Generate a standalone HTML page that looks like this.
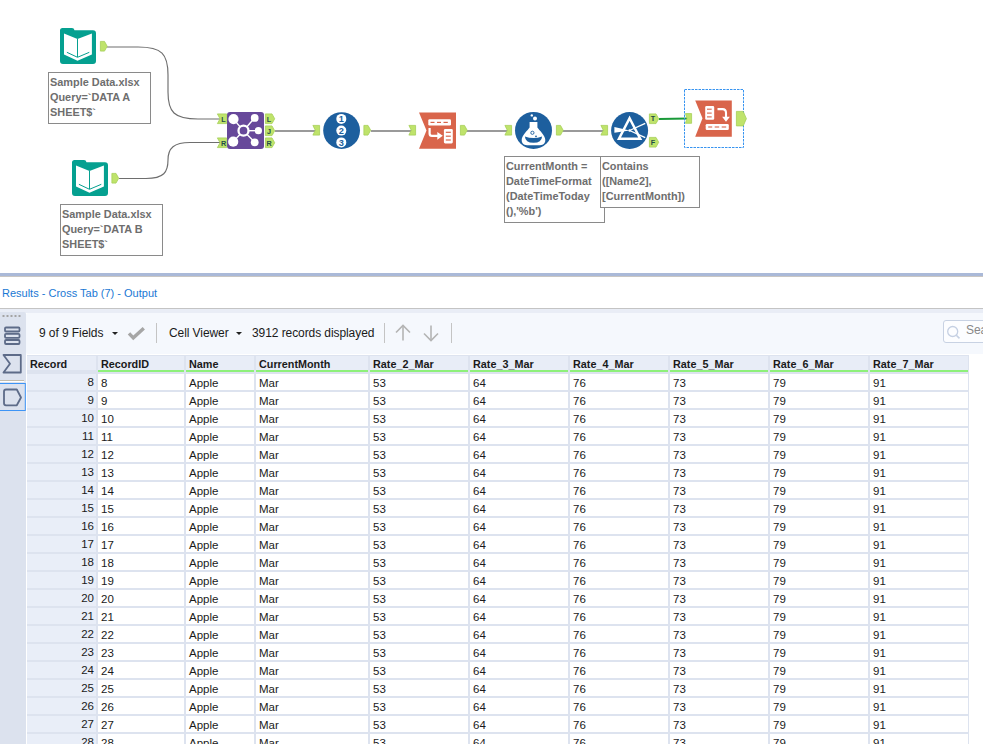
<!DOCTYPE html>
<html><head><meta charset="utf-8">
<style>
*{margin:0;padding:0;box-sizing:border-box}
html,body{width:983px;height:744px;overflow:hidden;background:#fff;font-family:"Liberation Sans",sans-serif}
#root{position:relative;width:983px;height:744px;overflow:hidden}
.ann{position:absolute;border:1px solid #8a8a8a;background:#fff;font-weight:bold;font-size:10.9px;line-height:15px;color:#6e6e6e;padding:2px 0 0 1px;white-space:nowrap;overflow:hidden}
.sepbar{position:absolute;left:0;top:273px;width:983px;height:3px;background:#aab9d8}
.sepline{position:absolute;left:0;top:276px;width:983px;height:2px;background:linear-gradient(#c9c6c3 50%,#e6e6e6 50%)}
.reshead{position:absolute;left:0;top:277px;width:983px;height:32px;background:#fff;border-bottom:1px solid #c4c4c4}
.restitle{position:absolute;left:2px;top:287px;font-size:11px;color:#1a78d4;white-space:nowrap}
.band{position:absolute;left:0;top:309px;width:983px;height:4px;background:#e9edf6}
.side{position:absolute;left:0;top:312px;width:26px;height:432px;background:#dce2ee;border-top-right-radius:2px}
.toolbar{position:absolute;left:26px;top:313px;width:957px;height:41px;background:#f5f8fd;border-top-left-radius:2px;border-bottom-left-radius:2px}
.tb{position:absolute;font-size:12px;letter-spacing:-0.08px;line-height:14px;color:#1a1a1a;white-space:nowrap;top:326px}
.vsep{position:absolute;top:323px;width:1px;height:20px;background:#c4c4c4}
.tablebg{position:absolute;left:26px;top:354px;width:957px;height:390px;background:#fff}
.grid{position:absolute;left:27px;top:355px;width:942px;height:389px;background:#dde3ef}
.hc{position:absolute;top:356px;height:14px;background:#e8edf7;font-weight:bold;font-size:10.8px;line-height:12px;color:#1a1a1a;padding:2px 0 0 3px;white-space:nowrap;overflow:hidden}
.gl{position:absolute;top:370px;height:2px;background:#8ef07a}
.rc{position:absolute;height:16px;background:#e9eef8;font-size:11.5px;line-height:13px;color:#1a1a1a;text-align:right;padding:2px 2px 0 0;white-space:nowrap}
.dc{position:absolute;height:16px;background:#fff;font-size:11.5px;line-height:13px;color:#1a1a1a;padding:3px 0 0 3px;white-space:nowrap;overflow:hidden}
.tri{position:absolute;width:0;height:0;border-left:3px solid transparent;border-right:3px solid transparent;border-top:3px solid #222}
</style></head><body><div id="root">
<svg width="983" height="272" viewBox="0 0 983 272" style="position:absolute;left:0;top:0">
<g fill="none" stroke="#6e6e6e" stroke-width="1.15">
<path d="M107,47 L138,47 C162,47 168,54 168,75 L168,92 C168,112 174,119 198,119 L220,119"/>
<path d="M119,178.5 L146,178.5 C164,178.5 168,172 168,160 C168,148 174,142.5 190,142.5 L220,142.5"/>
</g>
<g stroke="#9a9a9a" stroke-width="2">
<line x1="275" y1="131" x2="316" y2="131"/>
<line x1="371" y1="131" x2="412" y2="131"/>
<line x1="467" y1="131" x2="508" y2="131"/>
<line x1="563" y1="131" x2="604" y2="131"/>
</g>
<line x1="659" y1="119" x2="688" y2="118.5" stroke="#1a9a3a" stroke-width="2"/>
<g transform="translate(60,28)">
<path d="M2.5,0 L12,0 Q14,0 14.5,2.2 L33,2.2 Q36,2.2 36,5.2 L36,33 Q36,36 33,36 L3,36 Q0,36 0,33 L0,2.5 Q0,0 2.5,0 Z" fill="#05a090"/>
<polygon points="4,5.4 17.5,11 31.9,5.4 31.9,26.5 17.5,32.8 4,26.5" fill="#fff"/>
<polyline points="6.9,24.3 17.5,29.3 29.3,24.3" fill="none" stroke="#05a090" stroke-width="1"/>
<line x1="17.5" y1="11" x2="17.5" y2="29" stroke="#05a090" stroke-width="1"/>
</g>
<g transform="translate(72,160)">
<path d="M2.5,0 L12,0 Q14,0 14.5,2.2 L33,2.2 Q36,2.2 36,5.2 L36,33 Q36,36 33,36 L3,36 Q0,36 0,33 L0,2.5 Q0,0 2.5,0 Z" fill="#05a090"/>
<polygon points="4,5.4 17.5,11 31.9,5.4 31.9,26.5 17.5,32.8 4,26.5" fill="#fff"/>
<polyline points="6.9,24.3 17.5,29.3 29.3,24.3" fill="none" stroke="#05a090" stroke-width="1"/>
<line x1="17.5" y1="11" x2="17.5" y2="29" stroke="#05a090" stroke-width="1"/>
</g>
<path d="M100.4,41.4 L104.5,41.4 L107.2,46.25 L104.5,51.1 L100.4,51.1 Z" fill="#bfe36b" stroke="#a6cf58" stroke-width="0.8" stroke-linejoin="round"/>
<path d="M111.9,173.4 L116.0,173.4 L118.7,178.25 L116.0,183.1 L111.9,183.1 Z" fill="#bfe36b" stroke="#a6cf58" stroke-width="0.8" stroke-linejoin="round"/>
<g transform="translate(227,112)">
<rect x="0" y="0" width="37" height="37" rx="3" fill="#67489a"/>
<g stroke="#fff" stroke-width="1.4">
<line x1="16.5" y1="18.7" x2="6.5" y2="7.1"/><line x1="16.5" y1="18.7" x2="27.7" y2="5.8"/>
<line x1="16.5" y1="18.7" x2="31.6" y2="18.7"/><line x1="16.5" y1="18.7" x2="27.7" y2="30.3"/>
<line x1="16.5" y1="18.7" x2="6.1" y2="29.7"/>
</g>
<circle cx="6.5" cy="7.1" r="5.1" fill="#fff"/><circle cx="27.7" cy="5.9" r="3.9" fill="#fff"/>
<circle cx="31.4" cy="18.7" r="3.6" fill="#fff"/><circle cx="27.7" cy="30.3" r="3.9" fill="#fff"/>
<circle cx="6.2" cy="29.7" r="5.1" fill="#fff"/>
<circle cx="16.5" cy="18.7" r="5" fill="#67489a" stroke="#fff" stroke-width="2.3"/>
</g>
<polygon points="217.4,113.9 226.6,113.9 226.6,123.6 217.4,123.6 220,118.75" fill="#bfe36b" stroke="#a6cf58" stroke-width="0.8"/>
<text x="223.5" y="121.5" text-anchor="middle" font-family="Liberation Sans" font-weight="bold" font-size="7.2" fill="#1f4d47">L</text>
<polygon points="217.4,137.9 226.6,137.9 226.6,147.6 217.4,147.6 220,142.75" fill="#bfe36b" stroke="#a6cf58" stroke-width="0.8"/>
<text x="223.5" y="145.5" text-anchor="middle" font-family="Liberation Sans" font-weight="bold" font-size="7.2" fill="#1f4d47">R</text>
<path d="M265.4,113.9 L272,113.9 L274.7,118.75 L272,123.6 L265.4,123.6 Z" fill="#bfe36b" stroke="#a6cf58" stroke-width="0.8" stroke-linejoin="round"/>
<text x="269" y="121.5" text-anchor="middle" font-family="Liberation Sans" font-weight="bold" font-size="7.2" fill="#1f4d47">L</text>
<path d="M265.4,125.9 L272,125.9 L274.7,130.75 L272,135.6 L265.4,135.6 Z" fill="#bfe36b" stroke="#a6cf58" stroke-width="0.8" stroke-linejoin="round"/>
<text x="269" y="133.5" text-anchor="middle" font-family="Liberation Sans" font-weight="bold" font-size="7.2" fill="#1f4d47">J</text>
<path d="M265.4,137.9 L272,137.9 L274.7,142.75 L272,147.6 L265.4,147.6 Z" fill="#bfe36b" stroke="#a6cf58" stroke-width="0.8" stroke-linejoin="round"/>
<text x="269" y="145.5" text-anchor="middle" font-family="Liberation Sans" font-weight="bold" font-size="7.2" fill="#1f4d47">R</text>
<polygon points="312.9,125.4 319.6,125.4 319.6,135.1 312.9,135.1 315.3,130.25" fill="#bfe36b" stroke="#a6cf58" stroke-width="0.8"/>
<circle cx="341.6" cy="130.6" r="18.4" fill="#1d5f9e"/>
<circle cx="341.3" cy="118.9" r="5" fill="#fff"/><text x="341.3" y="122.30000000000001" text-anchor="middle" font-family="Liberation Sans" font-weight="bold" font-size="9.2" fill="#1d5f9e">1</text>
<circle cx="341.3" cy="130.6" r="5" fill="#fff"/><text x="341.3" y="134.0" text-anchor="middle" font-family="Liberation Sans" font-weight="bold" font-size="9.2" fill="#1d5f9e">2</text>
<circle cx="341.3" cy="142.4" r="5" fill="#fff"/><text x="341.3" y="145.8" text-anchor="middle" font-family="Liberation Sans" font-weight="bold" font-size="9.2" fill="#1d5f9e">3</text>
<path d="M363.9,125.4 L368.0,125.4 L370.7,130.25 L368.0,135.1 L363.9,135.1 Z" fill="#bfe36b" stroke="#a6cf58" stroke-width="0.8" stroke-linejoin="round"/>
<polygon points="408.9,125.4 415.6,125.4 415.6,135.1 408.9,135.1 411.3,130.25" fill="#bfe36b" stroke="#a6cf58" stroke-width="0.8"/>
<g transform="translate(419,112.4)">
<polygon points="0,0 37,0 37,36.3 0,36.3 7.5,18.2" fill="#d9654b"/>
<rect x="9.3" y="6.8" width="22.7" height="6.4" rx="1.3" fill="#fff"/>
<g stroke="#d9654b" stroke-width="1.2"><line x1="11.5" y1="10" x2="15.5" y2="10"/><line x1="18" y1="10" x2="22" y2="10"/><line x1="24.5" y1="10" x2="28.8" y2="10"/></g>
<path d="M10.6,15.7 L10.6,21 Q10.6,23.4 13,23.4 L19.5,23.4" fill="none" stroke="#fff" stroke-width="2.2"/>
<polygon points="18.3,19.5 23.8,23.4 18.3,27.3" fill="#fff"/>
<rect x="24.9" y="16.7" width="8.9" height="14.3" rx="1.3" fill="#fff"/>
<g stroke="#d9654b" stroke-width="1.2"><line x1="26.8" y1="19.9" x2="31.8" y2="19.9"/><line x1="26.8" y1="23.8" x2="31.8" y2="23.8"/><line x1="26.8" y1="27.6" x2="31.8" y2="27.6"/></g>
</g>
<path d="M460.4,125.4 L464.5,125.4 L467.2,130.25 L464.5,135.1 L460.4,135.1 Z" fill="#bfe36b" stroke="#a6cf58" stroke-width="0.8" stroke-linejoin="round"/>
<polygon points="504.9,125.4 511.6,125.4 511.6,135.1 504.9,135.1 507.3,130.25" fill="#bfe36b" stroke="#a6cf58" stroke-width="0.8"/>
<g transform="translate(533.5,130.4)">
<circle r="18.5" fill="#1d5f9e"/>
<path d="M-3.9,-8.3 L3.9,-8.3 L3.9,-3 C5.5,-0.5 11.8,5 11.8,9.5 C11.8,13.5 9,14.8 5,14.8 L-5,14.8 C-9,14.8 -11.8,13.5 -11.8,9.5 C-11.8,5 -5.5,-0.5 -3.9,-3 Z" fill="#fff"/>
<path d="M-8.6,6 Q0,9 8.6,6 Q8.2,12.3 0,12.3 Q-8.2,12.3 -8.6,6 Z" fill="#1d5f9e"/>
<circle cx="-1.1" cy="2.4" r="1.6" fill="none" stroke="#1d5f9e" stroke-width="0.9"/>
<circle cx="2.5" cy="5.9" r="0.9" fill="#1d5f9e"/>
<circle cx="1.5" cy="-11.8" r="2" fill="#fff"/><circle cx="-1.7" cy="-15" r="1.2" fill="#fff"/>
</g>
<path d="M556.4,125.4 L560.5,125.4 L563.2,130.25 L560.5,135.1 L556.4,135.1 Z" fill="#bfe36b" stroke="#a6cf58" stroke-width="0.8" stroke-linejoin="round"/>
<polygon points="600.9,125.4 607.6,125.4 607.6,135.1 600.9,135.1 603.3,130.25" fill="#bfe36b" stroke="#a6cf58" stroke-width="0.8"/>
<g transform="translate(629.6,130.5)">
<circle r="18.5" fill="#1d5f9e"/>
<polygon points="0,-12.3 10.6,8.2 -10.6,8.2" fill="none" stroke="#fff" stroke-width="2.5" stroke-linejoin="miter"/><circle cx="0" cy="0" r="1.2" fill="#fff"/>
<polygon points="-15.2,-3.4 -15.2,2.3 0,0" fill="#fff"/>
<line x1="0" y1="0" x2="15.6" y2="-7.1" stroke="#fff" stroke-width="1.3"/>
<line x1="0" y1="0" x2="15.6" y2="7.1" stroke="#fff" stroke-width="1.3"/>
</g>
<path d="M649.4,113.9 L656,113.9 L658.7,118.75 L656,123.6 L649.4,123.6 Z" fill="#bfe36b" stroke="#a6cf58" stroke-width="0.8" stroke-linejoin="round"/>
<text x="653" y="121" text-anchor="middle" font-family="Liberation Sans" font-weight="bold" font-size="7.2" fill="#1f4d47">T</text>
<path d="M649.4,137.4 L656,137.4 L658.7,142.25 L656,147.1 L649.4,147.1 Z" fill="#bfe36b" stroke="#a6cf58" stroke-width="0.8" stroke-linejoin="round"/>
<text x="653" y="144.5" text-anchor="middle" font-family="Liberation Sans" font-weight="bold" font-size="7.2" fill="#1f4d47">F</text>
<rect x="684.5" y="89.5" width="59" height="58" fill="none" stroke="#3894f0" stroke-width="1" stroke-dasharray="2.5,1"/>
<polygon points="685.4,113.60000000000001 691.6,113.60000000000001 691.6,123.3 685.4,123.3 687,118.45" fill="#bfe36b" stroke="#a6cf58" stroke-width="0.8"/>
<g transform="translate(695.2,100.5)">
<polygon points="0,0 36.6,0 36.6,36.2 0,36.2 7.3,17.8" fill="#d9654b"/>
<rect x="10" y="5.6" width="9" height="13.7" rx="1.3" fill="#fff"/>
<g stroke="#d9654b" stroke-width="1.1"><line x1="11.8" y1="8.7" x2="16.5" y2="8.7"/><line x1="11.8" y1="12.6" x2="16.5" y2="12.6"/><line x1="11.8" y1="16.4" x2="16.5" y2="16.4"/></g>
<path d="M22.3,8.6 L27.3,8.6 Q30.8,8.6 30.8,12.3 L30.8,17" fill="none" stroke="#fff" stroke-width="2.1"/>
<polygon points="26.9,16.3 34.7,16.3 30.8,21.2" fill="#fff"/>
<rect x="10.5" y="23.5" width="23.1" height="6.1" rx="1.3" fill="#fff"/>
<g stroke="#d9654b" stroke-width="1.1"><line x1="13" y1="26.5" x2="17" y2="26.5"/><line x1="19.5" y1="26.5" x2="24" y2="26.5"/><line x1="26.5" y1="26.5" x2="31" y2="26.5"/></g>
</g>
<path d="M736.4,111.4 L743.2,111.4 L746.4000000000001,118.65 L743.2,125.89999999999999 L736.4,125.89999999999999 Z" fill="#bfe36b" stroke="#a6cf58" stroke-width="0.8" stroke-linejoin="round"/>
</svg>
<div class="ann" style="left:48px;top:72px;width:103px;height:52px">Sample Data.xlsx<br>Query=`DATA A<br>SHEET$`</div><div class="ann" style="left:60px;top:204px;width:103px;height:52px">Sample Data.xlsx<br>Query=`DATA B<br>SHEET$`</div><div class="ann" style="left:504px;top:156px;width:101px;height:67px">CurrentMonth =<br>DateTimeFormat<br>(DateTimeToday<br>(),'%b')</div><div class="ann" style="left:600px;top:156px;width:100px;height:52px">Contains<br>([Name2],<br>[CurrentMonth])</div>
<div class="sepbar"></div><div class="sepline"></div>
<div class="reshead"></div>
<div class="restitle">Results - Cross Tab (7) - Output</div>
<div class="band"></div>
<div class="tablebg"></div>
<div class="side"></div>
<div class="toolbar"></div>
<div class="tb" style="left:39px">9 of 9 Fields</div>
<div class="tri" style="left:112px;top:332px"></div>
<svg style="position:absolute;left:127px;top:326px" width="19" height="15"><polyline points="2,7.3 6.3,11.8 16.8,2.2" fill="none" stroke="#a6a6a6" stroke-width="3.4"/></svg>
<div class="vsep" style="left:156px"></div>
<div class="tb" style="left:169px">Cell Viewer</div>
<div class="tri" style="left:236px;top:332px"></div>
<div class="tb" style="left:252px">3912 records displayed</div>
<div class="vsep" style="left:384px"></div>
<svg style="position:absolute;left:393px;top:323px" width="20" height="20"><g fill="none" stroke="#b4b4b4" stroke-width="1.6"><line x1="10" y1="2.5" x2="10" y2="17.5"/><polyline points="3,9.5 10,2.5 17,9.5"/></g></svg>
<svg style="position:absolute;left:421px;top:323px" width="20" height="20"><g fill="none" stroke="#b4b4b4" stroke-width="1.6"><line x1="10" y1="2.5" x2="10" y2="17.5"/><polyline points="3,10.5 10,17.5 17,10.5"/></g></svg>
<div class="vsep" style="left:451px"></div>
<div style="position:absolute;left:943px;top:320px;width:60px;height:23px;border:1px solid #c8d2e3;border-radius:3px;background:#fcfdff"></div>
<svg style="position:absolute;left:945px;top:324px" width="18" height="18"><circle cx="7.7" cy="7.5" r="5" fill="none" stroke="#c5d0e3" stroke-width="1.3"/><line x1="11.3" y1="11.2" x2="14.5" y2="14.4" stroke="#c5d0e3" stroke-width="1.6"/></svg>
<div class="tb" style="left:966px;top:323px;color:#888">Search</div>
<div class="grid"></div>
<div class="hc" style="left:27px;width:69px">Record</div><div class="hc" style="left:98px;width:86px">RecordID</div><div class="gl" style="left:98px;width:86px"></div><div class="hc" style="left:186px;width:68px">Name</div><div class="gl" style="left:186px;width:68px"></div><div class="hc" style="left:256px;width:112px">CurrentMonth</div><div class="gl" style="left:256px;width:112px"></div><div class="hc" style="left:370px;width:98px">Rate_2_Mar</div><div class="gl" style="left:370px;width:98px"></div><div class="hc" style="left:470px;width:98px">Rate_3_Mar</div><div class="gl" style="left:470px;width:98px"></div><div class="hc" style="left:570px;width:98px">Rate_4_Mar</div><div class="gl" style="left:570px;width:98px"></div><div class="hc" style="left:670px;width:98px">Rate_5_Mar</div><div class="gl" style="left:670px;width:98px"></div><div class="hc" style="left:770px;width:98px">Rate_6_Mar</div><div class="gl" style="left:770px;width:98px"></div><div class="hc" style="left:870px;width:98px">Rate_7_Mar</div><div class="gl" style="left:870px;width:98px"></div><div class="rc" style="left:27px;top:374px;width:69px">8</div><div class="dc" style="left:98px;top:374px;width:86px">8</div><div class="dc" style="left:186px;top:374px;width:68px">Apple</div><div class="dc" style="left:256px;top:374px;width:112px">Mar</div><div class="dc" style="left:370px;top:374px;width:98px">53</div><div class="dc" style="left:470px;top:374px;width:98px">64</div><div class="dc" style="left:570px;top:374px;width:98px">76</div><div class="dc" style="left:670px;top:374px;width:98px">73</div><div class="dc" style="left:770px;top:374px;width:98px">79</div><div class="dc" style="left:870px;top:374px;width:98px">91</div><div class="rc" style="left:27px;top:392px;width:69px">9</div><div class="dc" style="left:98px;top:392px;width:86px">9</div><div class="dc" style="left:186px;top:392px;width:68px">Apple</div><div class="dc" style="left:256px;top:392px;width:112px">Mar</div><div class="dc" style="left:370px;top:392px;width:98px">53</div><div class="dc" style="left:470px;top:392px;width:98px">64</div><div class="dc" style="left:570px;top:392px;width:98px">76</div><div class="dc" style="left:670px;top:392px;width:98px">73</div><div class="dc" style="left:770px;top:392px;width:98px">79</div><div class="dc" style="left:870px;top:392px;width:98px">91</div><div class="rc" style="left:27px;top:410px;width:69px">10</div><div class="dc" style="left:98px;top:410px;width:86px">10</div><div class="dc" style="left:186px;top:410px;width:68px">Apple</div><div class="dc" style="left:256px;top:410px;width:112px">Mar</div><div class="dc" style="left:370px;top:410px;width:98px">53</div><div class="dc" style="left:470px;top:410px;width:98px">64</div><div class="dc" style="left:570px;top:410px;width:98px">76</div><div class="dc" style="left:670px;top:410px;width:98px">73</div><div class="dc" style="left:770px;top:410px;width:98px">79</div><div class="dc" style="left:870px;top:410px;width:98px">91</div><div class="rc" style="left:27px;top:428px;width:69px">11</div><div class="dc" style="left:98px;top:428px;width:86px">11</div><div class="dc" style="left:186px;top:428px;width:68px">Apple</div><div class="dc" style="left:256px;top:428px;width:112px">Mar</div><div class="dc" style="left:370px;top:428px;width:98px">53</div><div class="dc" style="left:470px;top:428px;width:98px">64</div><div class="dc" style="left:570px;top:428px;width:98px">76</div><div class="dc" style="left:670px;top:428px;width:98px">73</div><div class="dc" style="left:770px;top:428px;width:98px">79</div><div class="dc" style="left:870px;top:428px;width:98px">91</div><div class="rc" style="left:27px;top:446px;width:69px">12</div><div class="dc" style="left:98px;top:446px;width:86px">12</div><div class="dc" style="left:186px;top:446px;width:68px">Apple</div><div class="dc" style="left:256px;top:446px;width:112px">Mar</div><div class="dc" style="left:370px;top:446px;width:98px">53</div><div class="dc" style="left:470px;top:446px;width:98px">64</div><div class="dc" style="left:570px;top:446px;width:98px">76</div><div class="dc" style="left:670px;top:446px;width:98px">73</div><div class="dc" style="left:770px;top:446px;width:98px">79</div><div class="dc" style="left:870px;top:446px;width:98px">91</div><div class="rc" style="left:27px;top:464px;width:69px">13</div><div class="dc" style="left:98px;top:464px;width:86px">13</div><div class="dc" style="left:186px;top:464px;width:68px">Apple</div><div class="dc" style="left:256px;top:464px;width:112px">Mar</div><div class="dc" style="left:370px;top:464px;width:98px">53</div><div class="dc" style="left:470px;top:464px;width:98px">64</div><div class="dc" style="left:570px;top:464px;width:98px">76</div><div class="dc" style="left:670px;top:464px;width:98px">73</div><div class="dc" style="left:770px;top:464px;width:98px">79</div><div class="dc" style="left:870px;top:464px;width:98px">91</div><div class="rc" style="left:27px;top:482px;width:69px">14</div><div class="dc" style="left:98px;top:482px;width:86px">14</div><div class="dc" style="left:186px;top:482px;width:68px">Apple</div><div class="dc" style="left:256px;top:482px;width:112px">Mar</div><div class="dc" style="left:370px;top:482px;width:98px">53</div><div class="dc" style="left:470px;top:482px;width:98px">64</div><div class="dc" style="left:570px;top:482px;width:98px">76</div><div class="dc" style="left:670px;top:482px;width:98px">73</div><div class="dc" style="left:770px;top:482px;width:98px">79</div><div class="dc" style="left:870px;top:482px;width:98px">91</div><div class="rc" style="left:27px;top:500px;width:69px">15</div><div class="dc" style="left:98px;top:500px;width:86px">15</div><div class="dc" style="left:186px;top:500px;width:68px">Apple</div><div class="dc" style="left:256px;top:500px;width:112px">Mar</div><div class="dc" style="left:370px;top:500px;width:98px">53</div><div class="dc" style="left:470px;top:500px;width:98px">64</div><div class="dc" style="left:570px;top:500px;width:98px">76</div><div class="dc" style="left:670px;top:500px;width:98px">73</div><div class="dc" style="left:770px;top:500px;width:98px">79</div><div class="dc" style="left:870px;top:500px;width:98px">91</div><div class="rc" style="left:27px;top:518px;width:69px">16</div><div class="dc" style="left:98px;top:518px;width:86px">16</div><div class="dc" style="left:186px;top:518px;width:68px">Apple</div><div class="dc" style="left:256px;top:518px;width:112px">Mar</div><div class="dc" style="left:370px;top:518px;width:98px">53</div><div class="dc" style="left:470px;top:518px;width:98px">64</div><div class="dc" style="left:570px;top:518px;width:98px">76</div><div class="dc" style="left:670px;top:518px;width:98px">73</div><div class="dc" style="left:770px;top:518px;width:98px">79</div><div class="dc" style="left:870px;top:518px;width:98px">91</div><div class="rc" style="left:27px;top:536px;width:69px">17</div><div class="dc" style="left:98px;top:536px;width:86px">17</div><div class="dc" style="left:186px;top:536px;width:68px">Apple</div><div class="dc" style="left:256px;top:536px;width:112px">Mar</div><div class="dc" style="left:370px;top:536px;width:98px">53</div><div class="dc" style="left:470px;top:536px;width:98px">64</div><div class="dc" style="left:570px;top:536px;width:98px">76</div><div class="dc" style="left:670px;top:536px;width:98px">73</div><div class="dc" style="left:770px;top:536px;width:98px">79</div><div class="dc" style="left:870px;top:536px;width:98px">91</div><div class="rc" style="left:27px;top:554px;width:69px">18</div><div class="dc" style="left:98px;top:554px;width:86px">18</div><div class="dc" style="left:186px;top:554px;width:68px">Apple</div><div class="dc" style="left:256px;top:554px;width:112px">Mar</div><div class="dc" style="left:370px;top:554px;width:98px">53</div><div class="dc" style="left:470px;top:554px;width:98px">64</div><div class="dc" style="left:570px;top:554px;width:98px">76</div><div class="dc" style="left:670px;top:554px;width:98px">73</div><div class="dc" style="left:770px;top:554px;width:98px">79</div><div class="dc" style="left:870px;top:554px;width:98px">91</div><div class="rc" style="left:27px;top:572px;width:69px">19</div><div class="dc" style="left:98px;top:572px;width:86px">19</div><div class="dc" style="left:186px;top:572px;width:68px">Apple</div><div class="dc" style="left:256px;top:572px;width:112px">Mar</div><div class="dc" style="left:370px;top:572px;width:98px">53</div><div class="dc" style="left:470px;top:572px;width:98px">64</div><div class="dc" style="left:570px;top:572px;width:98px">76</div><div class="dc" style="left:670px;top:572px;width:98px">73</div><div class="dc" style="left:770px;top:572px;width:98px">79</div><div class="dc" style="left:870px;top:572px;width:98px">91</div><div class="rc" style="left:27px;top:590px;width:69px">20</div><div class="dc" style="left:98px;top:590px;width:86px">20</div><div class="dc" style="left:186px;top:590px;width:68px">Apple</div><div class="dc" style="left:256px;top:590px;width:112px">Mar</div><div class="dc" style="left:370px;top:590px;width:98px">53</div><div class="dc" style="left:470px;top:590px;width:98px">64</div><div class="dc" style="left:570px;top:590px;width:98px">76</div><div class="dc" style="left:670px;top:590px;width:98px">73</div><div class="dc" style="left:770px;top:590px;width:98px">79</div><div class="dc" style="left:870px;top:590px;width:98px">91</div><div class="rc" style="left:27px;top:608px;width:69px">21</div><div class="dc" style="left:98px;top:608px;width:86px">21</div><div class="dc" style="left:186px;top:608px;width:68px">Apple</div><div class="dc" style="left:256px;top:608px;width:112px">Mar</div><div class="dc" style="left:370px;top:608px;width:98px">53</div><div class="dc" style="left:470px;top:608px;width:98px">64</div><div class="dc" style="left:570px;top:608px;width:98px">76</div><div class="dc" style="left:670px;top:608px;width:98px">73</div><div class="dc" style="left:770px;top:608px;width:98px">79</div><div class="dc" style="left:870px;top:608px;width:98px">91</div><div class="rc" style="left:27px;top:626px;width:69px">22</div><div class="dc" style="left:98px;top:626px;width:86px">22</div><div class="dc" style="left:186px;top:626px;width:68px">Apple</div><div class="dc" style="left:256px;top:626px;width:112px">Mar</div><div class="dc" style="left:370px;top:626px;width:98px">53</div><div class="dc" style="left:470px;top:626px;width:98px">64</div><div class="dc" style="left:570px;top:626px;width:98px">76</div><div class="dc" style="left:670px;top:626px;width:98px">73</div><div class="dc" style="left:770px;top:626px;width:98px">79</div><div class="dc" style="left:870px;top:626px;width:98px">91</div><div class="rc" style="left:27px;top:644px;width:69px">23</div><div class="dc" style="left:98px;top:644px;width:86px">23</div><div class="dc" style="left:186px;top:644px;width:68px">Apple</div><div class="dc" style="left:256px;top:644px;width:112px">Mar</div><div class="dc" style="left:370px;top:644px;width:98px">53</div><div class="dc" style="left:470px;top:644px;width:98px">64</div><div class="dc" style="left:570px;top:644px;width:98px">76</div><div class="dc" style="left:670px;top:644px;width:98px">73</div><div class="dc" style="left:770px;top:644px;width:98px">79</div><div class="dc" style="left:870px;top:644px;width:98px">91</div><div class="rc" style="left:27px;top:662px;width:69px">24</div><div class="dc" style="left:98px;top:662px;width:86px">24</div><div class="dc" style="left:186px;top:662px;width:68px">Apple</div><div class="dc" style="left:256px;top:662px;width:112px">Mar</div><div class="dc" style="left:370px;top:662px;width:98px">53</div><div class="dc" style="left:470px;top:662px;width:98px">64</div><div class="dc" style="left:570px;top:662px;width:98px">76</div><div class="dc" style="left:670px;top:662px;width:98px">73</div><div class="dc" style="left:770px;top:662px;width:98px">79</div><div class="dc" style="left:870px;top:662px;width:98px">91</div><div class="rc" style="left:27px;top:680px;width:69px">25</div><div class="dc" style="left:98px;top:680px;width:86px">25</div><div class="dc" style="left:186px;top:680px;width:68px">Apple</div><div class="dc" style="left:256px;top:680px;width:112px">Mar</div><div class="dc" style="left:370px;top:680px;width:98px">53</div><div class="dc" style="left:470px;top:680px;width:98px">64</div><div class="dc" style="left:570px;top:680px;width:98px">76</div><div class="dc" style="left:670px;top:680px;width:98px">73</div><div class="dc" style="left:770px;top:680px;width:98px">79</div><div class="dc" style="left:870px;top:680px;width:98px">91</div><div class="rc" style="left:27px;top:698px;width:69px">26</div><div class="dc" style="left:98px;top:698px;width:86px">26</div><div class="dc" style="left:186px;top:698px;width:68px">Apple</div><div class="dc" style="left:256px;top:698px;width:112px">Mar</div><div class="dc" style="left:370px;top:698px;width:98px">53</div><div class="dc" style="left:470px;top:698px;width:98px">64</div><div class="dc" style="left:570px;top:698px;width:98px">76</div><div class="dc" style="left:670px;top:698px;width:98px">73</div><div class="dc" style="left:770px;top:698px;width:98px">79</div><div class="dc" style="left:870px;top:698px;width:98px">91</div><div class="rc" style="left:27px;top:716px;width:69px">27</div><div class="dc" style="left:98px;top:716px;width:86px">27</div><div class="dc" style="left:186px;top:716px;width:68px">Apple</div><div class="dc" style="left:256px;top:716px;width:112px">Mar</div><div class="dc" style="left:370px;top:716px;width:98px">53</div><div class="dc" style="left:470px;top:716px;width:98px">64</div><div class="dc" style="left:570px;top:716px;width:98px">76</div><div class="dc" style="left:670px;top:716px;width:98px">73</div><div class="dc" style="left:770px;top:716px;width:98px">79</div><div class="dc" style="left:870px;top:716px;width:98px">91</div><div class="rc" style="left:27px;top:734px;width:69px">28</div><div class="dc" style="left:98px;top:734px;width:86px">28</div><div class="dc" style="left:186px;top:734px;width:68px">Apple</div><div class="dc" style="left:256px;top:734px;width:112px">Mar</div><div class="dc" style="left:370px;top:734px;width:98px">53</div><div class="dc" style="left:470px;top:734px;width:98px">64</div><div class="dc" style="left:570px;top:734px;width:98px">76</div><div class="dc" style="left:670px;top:734px;width:98px">73</div><div class="dc" style="left:770px;top:734px;width:98px">79</div><div class="dc" style="left:870px;top:734px;width:98px">91</div>
<!-- sidebar icons -->
<svg style="position:absolute;left:0;top:312px" width="26" height="110">
<g fill="#a3a3a3"><rect x="2.5" y="3" width="2" height="2"/><rect x="6.5" y="3" width="2" height="2"/><rect x="10.5" y="3" width="2" height="2"/><rect x="14.5" y="3" width="2" height="2"/><rect x="18.5" y="3" width="2" height="2"/></g>
<g fill="none" stroke="#5d6b88" stroke-width="1.8">
<rect x="5" y="15.5" width="14.5" height="4" rx="1"/><rect x="5" y="21.8" width="14.5" height="4" rx="1"/><rect x="5" y="28" width="14.5" height="4" rx="1"/>
<path d="M3.5,43 L20.8,43 L20.8,60.5 L3.5,60.5 L10,51.7 Z" stroke-linejoin="round"/>
<path d="M6,77.5 L16.8,77.5 L21,85.5 L16.8,93.3 L6,93.3 Q4,93.3 4,91.3 L4,79.5 Q4,77.5 6,77.5 Z" stroke-linejoin="round"/>
</g>
<rect x="0" y="68" width="24" height="1" fill="#c2bcae"/><rect x="0" y="69" width="24" height="1" fill="#fff"/>
<rect x="-1" y="71.5" width="26.3" height="27" fill="none" stroke="#3d94f6" stroke-width="1"/>
</svg>
</div></body></html>
